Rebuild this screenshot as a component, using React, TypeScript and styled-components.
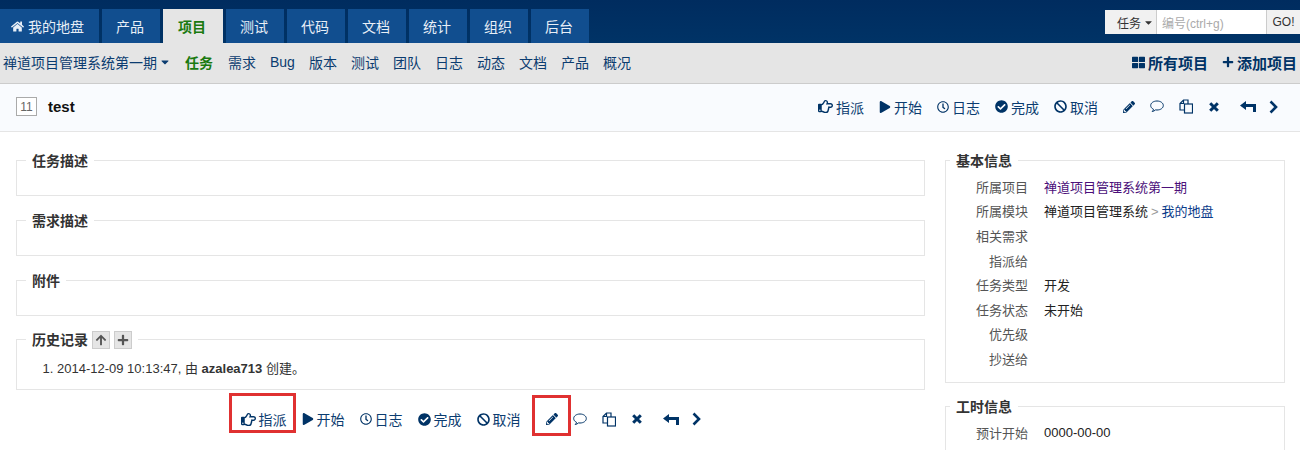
import React from 'react';
import styled, { createGlobalStyle } from 'styled-components';
import {
  FaHome, FaCaretDown, FaThLarge, FaPlus, FaRegHandPointRight, FaPlay, FaRegClock,
  FaCheckCircle, FaBan, FaPencilAlt, FaArrowUp,
} from 'react-icons/fa';

const GlobalStyle = createGlobalStyle`
  html, body {
    margin: 0;
    height: 450px;
    overflow: hidden;
    background: #fff;
    color: #222;
    font-family: "Liberation Sans", "Noto Sans CJK SC", sans-serif;
    font-size: 13px;
  }
`;

const Header = styled.div`
  height: 43px;
  display: flex;
  justify-content: space-between;
  align-items: flex-end;
  background: linear-gradient(#002c5f, #003366);
`;

const Tabs = styled.div`
  display: flex;
  gap: 3px;
`;

const Tab = styled.a<{ $active?: boolean; $wide?: boolean }>`
  width: ${({ $active, $wide }) => ($wide ? 99 : $active ? 60 : 58)}px;
  height: 34px;
  display: flex;
  align-items: center;
  justify-content: ${({ $wide }) => ($wide ? 'flex-start' : 'center')};
  gap: 4px;
  padding: ${({ $wide }) => ($wide ? '0 0 0 11px' : '0 2px 0 0')};
  box-sizing: border-box;
  font-size: 14px;
  font-weight: ${({ $active }) => ($active ? 700 : 400)};
  color: ${({ $active }) => ($active ? '#1a7a10' : '#e8eff7')};
  background: ${({ $active }) => ($active ? '#e5e5e5' : '#114e8f')};
`;

const Search = styled.div`
  display: flex;
  height: 24px;
  margin-bottom: 9px;
  font-size: 12px;
`;

const SearchType = styled.div`
  width: 51px;
  display: flex;
  align-items: center;
  gap: 2px;
  padding-left: 12px;
  box-sizing: border-box;
  background: #f1f1f1;
  color: #333;
`;

const SearchInput = styled.div`
  width: 110px;
  display: flex;
  align-items: center;
  padding-left: 5px;
  box-sizing: border-box;
  background: #fff;
  border-left: 1px solid #ccc;
  color: #aaa;
`;

const SearchGo = styled.div`
  width: 33px;
  display: flex;
  align-items: center;
  justify-content: center;
  background: #f1f1f1;
  border-left: 1px solid #ccc;
  color: #333;
`;

const SubNav = styled.div`
  height: 41px;
  box-sizing: border-box;
  display: flex;
  justify-content: space-between;
  align-items: center;
  padding: 0 3px 2px;
  background: #e5e5e5;
  border-bottom: 1px solid #ccc;
`;

const SubLinks = styled.div`
  display: flex;
  align-items: center;
  gap: 14px;
  font-size: 14px;
  color: #0b3c70;
`;

const SubLink = styled.a<{ $active?: boolean }>`
  font-weight: ${({ $active }) => ($active ? 700 : 400)};
  color: ${({ $active }) => ($active ? '#1a7a10' : '#0b3c70')};
  margin-right: ${({ $active }) => ($active ? 1 : 0)}px;
  display: inline-flex;
  align-items: center;
  gap: 2px;
`;

const SubActions = styled.div`
  display: flex;
  gap: 14px;
  font-size: 15px;
  font-weight: 700;
  color: #003366;
`;

const SubAction = styled.a`
  display: inline-flex;
  align-items: center;
  gap: 3px;
`;

const TitleBar = styled.div`
  height: 48px;
  display: flex;
  align-items: center;
  justify-content: space-between;
  padding: 0 22px 2px 16px;
  box-sizing: border-box;
  background: #f9fbfe;
  border-bottom: 1px solid #e5e5e5;
`;

const TitleLeft = styled.div`
  display: flex;
  align-items: center;
  gap: 11px;
  font-weight: 700;
  font-size: 15px;
  color: #111;
`;

const IdBox = styled.span`
  width: 21px;
  height: 19px;
  display: flex;
  align-items: center;
  justify-content: center;
  box-sizing: border-box;
  border: 1px solid #aaa;
  background: #fff;
  font-size: 12px;
  font-weight: 400;
  color: #666;
`;

const Actions = styled.div`
  display: flex;
  align-items: center;
  color: #0b3c70;
  font-size: 14px;
`;

const Action = styled.a<{ $gap?: number }>`
  position: relative;
  height: 20px;
  display: inline-flex;
  align-items: center;
  gap: 3px;
  margin-right: ${({ $gap }) => $gap ?? 15}px;
  svg { color: #003366; }
`;

// red annotation drawn over the screenshot
const RedMark = styled.span<{ $left: number; $right: number; $top: number; $bottom: number }>`
  position: absolute;
  left: ${({ $left }) => $left}px;
  right: ${({ $right }) => $right}px;
  top: ${({ $top }) => $top}px;
  bottom: ${({ $bottom }) => $bottom}px;
  border: 3px solid #e03131;
`;

const Body = styled.div`
  display: flex;
  gap: 20px;
  padding: 18px 15px 0 16px;
`;

const Main = styled.div`
  width: 909px;
  flex: none;
`;

const Side = styled.div`
  flex: 1;
`;

const Box = styled.fieldset<{ $h: number; $gap?: number }>`
  margin: 0 0 ${({ $gap }) => $gap ?? 14}px;
  padding: 0;
  min-height: ${({ $h }) => $h}px;
  box-sizing: border-box;
  border: 1px solid #e5e5e5;
  min-width: 0;
`;

const Legend = styled.legend<{ $side?: boolean }>`
  margin-left: ${({ $side }) => ($side ? 4 : 9)}px;
  padding: 2px 6px 0;
  font-weight: 700;
  font-size: 14px;
  line-height: 18px;
  color: #333;
  display: flex;
  align-items: center;
  gap: 4px;
`;

const MiniButton = styled.span`
  width: 18px;
  height: 18px;
  display: inline-flex;
  align-items: center;
  justify-content: center;
  box-sizing: border-box;
  background: #e5e5e5;
  border: 1px solid #ccc;
  color: #555;
  font-size: 12px;
`;

const HistoryList = styled.ol`
  margin: 10px 0;
  padding-left: 40px;
  line-height: 20px;
  color: #333;
`;

const BottomActions = styled.div`
  display: flex;
  justify-content: center;
  margin-top: 19px;
`;

const InfoRow = styled.div`
  display: flex;
  height: 24.6px;
  align-items: center;
`;

const InfoLabel = styled.span`
  width: 82px;
  text-align: right;
  color: #555;
  flex: none;
`;

const InfoValue = styled.span<{ $color?: string }>`
  margin-left: 16px;
  color: ${({ $color }) => $color ?? '#222'};
`;

const Crumb = styled.span`
  color: #999;
  margin: 0 3px;
`;

const ModuleLink = styled.a`
  color: #0b3c8a;
`;

const InfoBody = styled.div`
  padding: 4px 0 10px;
`;

const CommentIcon = () => (
  <svg width="14" height="13" viewBox="0 0 14 13" fill="none" stroke="currentColor" strokeWidth="1">
    <path d="M7 1C3.4 1 .7 3 .7 5.5c0 1.6 1.1 3 2.8 3.8-.2.9-.7 1.6-1.3 2.2 1.3-.2 2.5-.8 3.3-1.6.5.1 1 .1 1.5.1 3.6 0 6.3-2 6.3-4.5S10.6 1 7 1z" />
  </svg>
);

const CopyIcon = () => (
  <svg width="14" height="15" viewBox="0 0 14 15" fill="none" stroke="currentColor" strokeWidth="1.2">
    <path d="M5.5 11H1V4.5L4.5 1H9V5" />
    <path d="M4.5 1V4.5H1" />
    <rect x="5.5" y="5" width="8" height="9" />
  </svg>
);

const CloseIcon = () => (
  <svg width="10" height="10" viewBox="0 0 10 10" fill="none" stroke="currentColor" strokeWidth="3">
    <path d="M1.2 1.2L8.8 8.8M8.8 1.2L1.2 8.8" />
  </svg>
);

const BackIcon = () => (
  <svg width="16" height="11" viewBox="0 0 16 11" fill="currentColor">
    <polygon points="0,4.5 6,0 6,3 16,3 16,11 13,11 13,6 6,6 6,9" />
  </svg>
);

const NextIcon = () => (
  <svg width="9" height="14" viewBox="0 0 9 14" fill="none" stroke="currentColor" strokeWidth="2.6">
    <path d="M1.5 1.5L7 7L1.5 12.5" />
  </svg>
);

const tabs = ['产品', '项目', '测试', '代码', '文档', '统计', '组织', '后台'];
const subLinks = ['任务', '需求', 'Bug', '版本', '测试', '团队', '日志', '动态', '文档', '产品', '概况'];

const ActionRow = ({ marked }: { marked?: boolean }) => (
  <Actions>
    <Action>
      <FaRegHandPointRight size={15} />指派
      {marked && <RedMark $left={-12} $right={-9} $top={-16} $bottom={-4} />}
    </Action>
    <Action><FaPlay size={12} />开始</Action>
    <Action><FaRegClock size={12} />日志</Action>
    <Action><FaCheckCircle size={13} />完成</Action>
    <Action $gap={25}><FaBan size={13} />取消</Action>
    <Action>
      <FaPencilAlt size={12} />
      {marked && <RedMark $left={-14} $right={-13} $top={-14} $bottom={-7} />}
    </Action>
    <Action><CommentIcon /></Action>
    <Action $gap={16}><CopyIcon /></Action>
    <Action $gap={21}><CloseIcon /></Action>
    <Action $gap={13}><BackIcon /></Action>
    <Action $gap={0}><NextIcon /></Action>
  </Actions>
);

const App = () => {
  return (
    <>
      <GlobalStyle />
      <Header>
        <Tabs>
          <Tab $wide><FaHome size={13} />我的地盘</Tab>
          {tabs.map(t => <Tab key={t} $active={t === '项目'}>{t}</Tab>)}
        </Tabs>
        <Search>
          <SearchType>任务<FaCaretDown size={11} /></SearchType>
          <SearchInput>编号(ctrl+g)</SearchInput>
          <SearchGo>GO!</SearchGo>
        </Search>
      </Header>
      <SubNav>
        <SubLinks>
          <SubLink>禅道项目管理系统第一期<FaCaretDown size={12} /></SubLink>
          {subLinks.map((l, i) => <SubLink key={i} $active={l === '任务'}>{l}</SubLink>)}
        </SubLinks>
        <SubActions>
          <SubAction><FaThLarge size={13} />所有项目</SubAction>
          <SubAction><FaPlus size={12} />添加项目</SubAction>
        </SubActions>
      </SubNav>
      <TitleBar>
        <TitleLeft><IdBox>11</IdBox>test</TitleLeft>
        <ActionRow />
      </TitleBar>
      <Body>
        <Main>
          <Box $h={46}><Legend>任务描述</Legend></Box>
          <Box $h={46}><Legend>需求描述</Legend></Box>
          <Box $h={46} $gap={13}><Legend>附件</Legend></Box>
          <Box $h={60} $gap={15}>
            <Legend>历史记录<MiniButton><FaArrowUp /></MiniButton><MiniButton><FaPlus /></MiniButton></Legend>
            <HistoryList>
              <li>2014-12-09 10:13:47, 由 <b>azalea713</b> 创建。</li>
            </HistoryList>
          </Box>
          <BottomActions><ActionRow marked /></BottomActions>
        </Main>
        <Side>
          <Box $h={233} $gap={13}>
            <Legend $side>基本信息</Legend>
            <InfoBody>
              <InfoRow><InfoLabel>所属项目</InfoLabel><InfoValue $color="#4b0f7a">禅道项目管理系统第一期</InfoValue></InfoRow>
              <InfoRow><InfoLabel>所属模块</InfoLabel><InfoValue>禅道项目管理系统<Crumb>&gt;</Crumb><ModuleLink>我的地盘</ModuleLink></InfoValue></InfoRow>
              <InfoRow><InfoLabel>相关需求</InfoLabel></InfoRow>
              <InfoRow><InfoLabel>指派给</InfoLabel></InfoRow>
              <InfoRow><InfoLabel>任务类型</InfoLabel><InfoValue>开发</InfoValue></InfoRow>
              <InfoRow><InfoLabel>任务状态</InfoLabel><InfoValue>未开始</InfoValue></InfoRow>
              <InfoRow><InfoLabel>优先级</InfoLabel></InfoRow>
              <InfoRow><InfoLabel>抄送给</InfoLabel></InfoRow>
            </InfoBody>
          </Box>
          <Box $h={100}>
            <Legend $side>工时信息</Legend>
            <InfoBody>
              <InfoRow><InfoLabel>预计开始</InfoLabel><InfoValue>0000-00-00</InfoValue></InfoRow>
            </InfoBody>
          </Box>
        </Side>
      </Body>
    </>
  );
};

export default App;
